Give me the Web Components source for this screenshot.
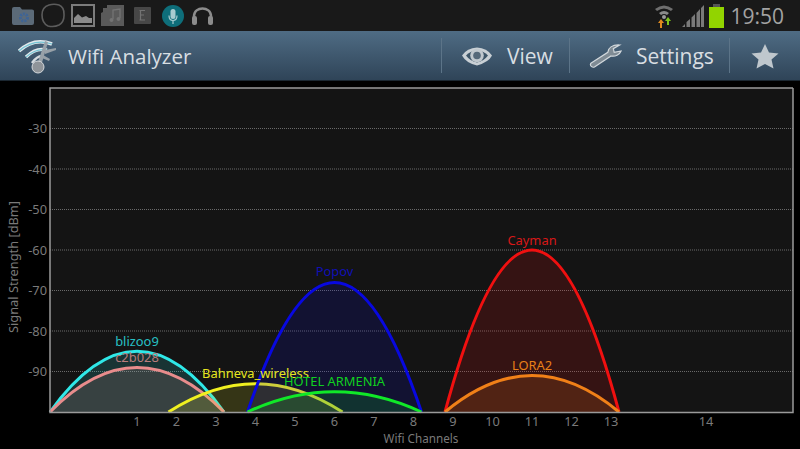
<!DOCTYPE html>
<html>
<head>
<meta charset="utf-8">
<style>
  html, body { margin: 0; background: #000; }
  body { width: 800px; height: 449px; overflow: hidden; display: flex; flex-direction: column; }
</style>
</head>
<body>
<status-bar></status-bar>
<action-bar>
  <action-item slot="view">
    <svg slot="icon" width="32" height="22" viewBox="0 0 32 22">
      <path d="M1 10.500Q6 3 16 2.500Q26 3 31 10.500Q28 17 16 20.500Q5 18 1 10.500Z" fill="#c9d0d5"/>
      <path d="M5 10.500Q9 6 16 5.500Q23 6 27 10.500Q23 16 16 17.500Q9 16 5 10.500Z" fill="#3d5568"/>
      <circle cx="16" cy="10.500" r="6.800" fill="#c0c8ce"/>
      <circle cx="16" cy="10.500" r="3.800" fill="#55697a"/>
    </svg>
    View
  </action-item>
  <action-item slot="settings">
    <svg slot="icon" width="33" height="26" viewBox="0 0 36 27"><path d="M2 21.500 20.500 9.500C21 5 25 1 33.500 1.500L26.500 5.500 27.500 9.500 35 8C33.500 12 28.500 14.500 24 13.500L6 25.500C3.500 26.500 .5 24 2 21.500Z" fill="#7f8b94" stroke="#d2d8dc" stroke-width="1.300"/></svg>
    Settings
  </action-item>
  <svg slot="star" width="28" height="26" viewBox="0 0 28 26"><path d="M14 1 18 9.500 27.500 10.500 20.500 16.500 22.500 25.500 14 21 5.500 25.500 7.500 16.500 .5 10.500 10 9.500Z" fill="#bfc7cd"/></svg>
</action-bar>
<wifi-chart></wifi-chart>
<script>
class StatusBar extends HTMLElement {
  constructor() {
    super();
    this.attachShadow({ mode: 'open' });
    this.shadowRoot.innerHTML = `
      <style>
        :host { display: flex; flex: none; height: 31px; background: #191919; align-items: center; padding: 0 16px 0 12px; box-sizing: border-box; }
        .left, .right { display: flex; align-items: center; }
        .left { flex: 1; }
        svg { display: block; flex: none; }
        .time { font: 21px "Open Sans", sans-serif; color: #a3a3a3; margin-left: 6px; }
      </style>
      <div class="left">
        <svg width="22" height="20" viewBox="0 0 22 20"><path d="M0 3Q0 1 2 1H8L10 3.500H20Q22 3.500 22 5V17Q22 19 20 19H2Q0 19 0 17Z" fill="#5b6a78"/><circle cx="12" cy="11.500" r="3.500" fill="none" stroke="#3e6496" stroke-width="3" stroke-dasharray="2 1"/></svg>
        <svg width="24" height="25" viewBox="0 0 24 25" style="margin-left:7px"><path d="M8 2Q13 .5 18 2Q23 4 23 11Q23.500 19 18 22Q13 24.500 7 23Q1 20 1 12Q1 4 8 2Z" fill="none" stroke="#5c5c5c" stroke-width="1.600"/></svg>
        <svg width="24" height="23" viewBox="0 0 24 23" style="margin-left:6px"><rect x="1" y="1" width="22" height="21" fill="none" stroke="#7c7c7c" stroke-width="2"/><path d="M3 19V14L7 10 11 13.500 15 12 18 14 21 14V19Z" fill="#8b8b8b"/></svg>
        <svg width="25" height="23" viewBox="0 0 25 23" style="margin-left:5px"><path d="M7 1H24V22H1V9L3 8V4H7Z" fill="#5a5a5a"/><path d="M13 15V6L20 5V14" fill="none" stroke="#737373" stroke-width="1.300"/><circle cx="11.500" cy="16" r="2" fill="#737373"/><circle cx="18.500" cy="15" r="2" fill="#737373"/></svg>
        <svg width="17" height="17" viewBox="0 0 17 17" style="margin-left:9px"><rect width="17" height="17" rx="1" fill="#474747"/><path d="M5.500 3.500H11M6.500 3.500V13M5.500 13H11M6.500 8H10" stroke="#737373" stroke-width="1.200" fill="none"/></svg>
        <svg width="22" height="22" viewBox="0 0 22 22" style="margin-left:11px"><circle cx="11" cy="11" r="11" fill="#0e6e7a"/><rect x="8.500" y="4" width="5" height="10" rx="2.500" fill="#a8ccd0"/><path d="M7 10.500Q7 15.500 11 15.500Q15 15.500 15 10.500M11 15.500V19" fill="none" stroke="#a8ccd0" stroke-width="1.200"/></svg>
        <svg width="23" height="21" viewBox="0 0 23 21" style="margin-left:7px"><path d="M3 14V11C3 1 20 1 20 11V14" fill="none" stroke="#8c8c8c" stroke-width="2.500"/><rect x="1" y="11" width="5" height="9" rx="2" fill="#8c8c8c"/><rect x="17" y="11" width="5" height="9" rx="2" fill="#8c8c8c"/></svg>
      </div>
      <div class="right">
        <svg width="20" height="24" viewBox="0 0 20 24"><path d="M1 5Q10 -2 19 5L17 7Q10 2 3 7Z" fill="#6f6f6f"/><path d="M5 9Q10 5 15 9L13 11Q10 9 7 11Z" fill="#8a8a8a"/><circle cx="10" cy="13" r="2" fill="#9a9a9a"/><path d="M6 24V19H4L7 15 10 19H8V24Z" fill="#e08a1e"/><path d="M13 21V17H11L14 13 17 17H15V21Z" fill="#7fc31c"/></svg>
        <svg width="22" height="22" viewBox="0 0 22 22" style="margin-left:8px"><path d="M0 22 3 19V22ZM4.500 22V17L8 14V22ZM9.500 22V12.500L13 9V22ZM14.500 22V8L18 4V22ZM19 22V3L22 0V22Z" fill="#7a7a7a"/></svg>
        <svg width="15" height="24" viewBox="0 0 15 24" style="margin-left:5px"><rect x="4" y="0" width="7" height="3" fill="#555"/><rect y="3" width="15" height="21" fill="#92d400"/></svg>
        <span class="time">19:50</span>
      </div>
    `;
  }
}

class ActionItem extends HTMLElement {
  constructor() {
    super();
    this.attachShadow({ mode: 'open' });
    this.shadowRoot.innerHTML = `
      <style>
        :host { display: flex; align-items: center; gap: 14px; color: #d8dee2; font: 21px "Open Sans", sans-serif; }
        ::slotted(svg) { display: block; }
      </style>
      <slot name="icon"></slot><slot></slot>
    `;
  }
}

class ActionBar extends HTMLElement {
  constructor() {
    super();
    this.attachShadow({ mode: 'open' });
    this.shadowRoot.innerHTML = `
      <style>
        :host { display: flex; flex: none; height: 50px; box-sizing: border-box; align-items: center; background: linear-gradient(#4f6c84, #2f4458); border-bottom: 1px solid #1b2731; color: #d8dee2; }
        .logo { display: block; margin-left: 17px; flex: none; }
        .title { font: 20.500px "Open Sans", sans-serif; margin-left: 10px; flex: 1; }
        .sep { width: 1px; height: 35px; background: #5c7488; flex: none; }
        .cell { display: flex; align-items: center; box-sizing: border-box; padding-left: 19px; }
        .view { width: 127px; }
        .settings { width: 159px; }
        .star { width: 70px; justify-content: center; padding-left: 0; }
      </style>
      <svg class="logo" width="41" height="36" viewBox="0 0 41 36">
        <path d="M2 13Q17 -1 35 6" fill="none" stroke="#e3e9ec" stroke-width="3.500"/>
        <path d="M2 13Q17 0 35 6" fill="none" stroke="#74c4d4" stroke-width="1.300"/>
        <path d="M9 19Q19 9 30 12" fill="none" stroke="#e3e9ec" stroke-width="3.200"/>
        <path d="M9 19Q19 10 30 12" fill="none" stroke="#74c4d4" stroke-width="1.100"/>
        <path d="M15 25Q20 18 25 18" fill="none" stroke="#d5dbdf" stroke-width="2.500"/>
        <path d="M20 27 28 3 31 4 24 28Z" fill="#98a1a8"/>
        <path d="M28 12 39 10 39 12 28 16ZM26 17 33 21 32 23 25 20Z" fill="#98a1a8"/>
        <circle cx="21" cy="29" r="6" fill="#8f9499" stroke="#d5d9dc"/>
      </svg>
      <span class="title">Wifi Analyzer</span>
      <div class="sep"></div>
      <div class="cell view"><slot name="view"></slot></div>
      <div class="sep"></div>
      <div class="cell settings"><slot name="settings"></slot></div>
      <div class="sep"></div>
      <div class="cell star"><slot name="star"></slot></div>
    `;
  }
}

const CH0 = 137, CH_W = 39.5, HALF = 87;
const Y0 = 88, DB = 4.05;
const chX = c => c == 14 ? 706 : CH0 + (c - 1) * CH_W;
const dbY = d => Y0 + (-20 - d) * DB;

const NETWORKS = [
  { name: 'blizoo9', ch: 1, db: -85, color: '#2fe8e8', text: '#27c0c4', ly: 345.500 },
  { name: 'c2b028', ch: 1, db: -89, color: '#e88c8c', text: '#b87c7c', ly: 361.500 },
  { name: 'Bahneva_wireless', ch: 4, db: -93, color: '#f0f020', text: '#e6e620', ly: 378 },
  { name: 'Popov', ch: 6, db: -68, color: '#0808e0', text: '#1010b4', ly: 276 },
  { name: 'HOTEL ARMENIA', ch: 6, db: -95, color: '#10e828', text: '#10d020', ly: 386 },
  { name: 'Cayman', ch: 11, db: -60, color: '#f01010', text: '#d81818', ly: 244.500 },
  { name: 'LORA2', ch: 11, db: -91, color: '#f08018', text: '#e88018', ly: 370 }
];

class WifiChart extends HTMLElement {
  constructor() {
    super();
    this.attachShadow({ mode: 'open' });
  }

  connectedCallback() {
    let s = '';
    for (let d = -30; d >= -90; d -= 10) {
      const y = dbY(d);
      s += `<line x1="50" x2="793" y1="${y}" y2="${y}" stroke="#6a6a6a" stroke-dasharray="1 1"/>`;
      s += `<text x="47" y="${y + 4.500}" text-anchor="end" class="axis">${d}</text>`;
    }
    for (let c = 1; c <= 14; c++) {
      s += `<text x="${chX(c)}" y="426" text-anchor="middle" class="axis">${c}</text>`;
    }
    for (const n of NETWORKS) {
      const x = chX(n.ch), top = dbY(n.db), base = dbY(-100);
      const d = `M${x - HALF} ${base}Q${x} ${2 * top - base} ${x + HALF} ${base}`;
      s += `<path d="${d}Z" fill="${n.color}" fill-opacity=".15"/>`;
      s += `<path d="${d}" fill="none" stroke="${n.color}" stroke-width="3"/>`;
    }
    for (const n of NETWORKS) {
      s += `<text x="${chX(n.ch)}" y="${n.ly}" text-anchor="middle" class="net" fill="${n.text}">${n.name}</text>`;
    }
    this.shadowRoot.innerHTML = `
      <style>
        :host { display: block; flex: 1; min-height: 0; }
        svg { display: block; }
        text { font-family: "Noto Sans", sans-serif; }
        .axis { font-size: 12.800px; fill: #7a7a7a; }
        .axis.x-title { font-size: 11.700px; }
        .axis.y-title { font-size: 12.800px; }
        .net { font-size: 12.900px; }
      </style>
      <svg width="800" height="368" viewBox="0 81 800 368">
        <rect x="50" y="88" width="743" height="324.500" fill="#141414"/>
        ${s}
        <path d="M793 88H50V412.500H793V88" fill="none" stroke="#9a9a9a" stroke-width="1.500"/>
        <text x="421" y="443" text-anchor="middle" class="axis x-title">Wifi Channels</text>
        <text transform="translate(18 267) rotate(-90)" text-anchor="middle" class="axis y-title">Signal Strength [dBm]</text>
      </svg>
    `;
  }
}

customElements.define('status-bar', StatusBar);
customElements.define('action-item', ActionItem);
customElements.define('action-bar', ActionBar);
customElements.define('wifi-chart', WifiChart);
</script>
</body>
</html>
